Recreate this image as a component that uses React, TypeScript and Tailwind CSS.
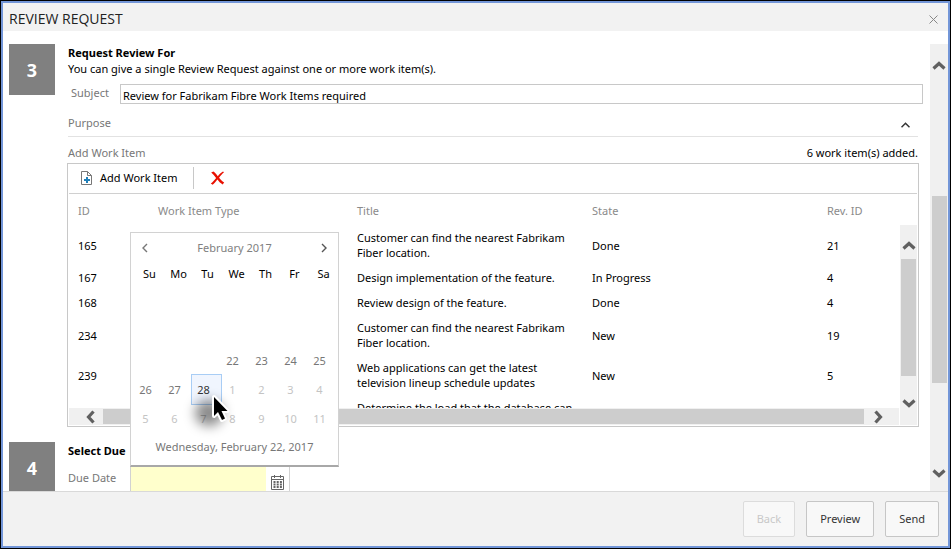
import React from "react";

type WorkItem = { id: string; type: string; title: string; state: string; rev: string };

const workItems: WorkItem[] = [
  { id: "165", type: "", title: "Customer can find the nearest Fabrikam Fiber location.", state: "Done", rev: "21" },
  { id: "167", type: "", title: "Design implementation of the feature.", state: "In Progress", rev: "4" },
  { id: "168", type: "", title: "Review design of the feature.", state: "Done", rev: "4" },
  { id: "234", type: "", title: "Customer can find the nearest Fabrikam Fiber location.", state: "New", rev: "19" },
  { id: "239", type: "", title: "Web applications can get the latest television lineup schedule updates", state: "New", rev: "5" },
  { id: "", type: "", title: "Determine the load that the database can", state: "", rev: "" },
];

const weekDays = ["Su", "Mo", "Tu", "We", "Th", "Fr", "Sa"];

const weeks: (number | null)[][] = [
  [null, null, null, null, null, null, null],
  [null, null, null, null, null, null, null],
  [null, null, null, 22, 23, 24, 25],
  [26, 27, 28, 1, 2, 3, 4],
  [5, 6, 7, 8, 9, 10, 11],
];

const arrowPaths = {
  up: "M2.5 10.5 L8 5.5 L13.5 10.5",
  down: "M2.5 5.5 L8 10.5 L13.5 5.5",
  left: "M10.5 2.5 L5.5 8 L10.5 13.5",
  right: "M5.5 2.5 L10.5 8 L5.5 13.5",
};

function ScrollArrow({ direction }: { direction: keyof typeof arrowPaths }) {
  return (
    <svg viewBox="0 0 16 16" className="size-4 shrink-0" fill="none" stroke="#606060" strokeWidth="3.2">
      <path d={arrowPaths[direction]} />
    </svg>
  );
}

function StepBadge({ value }: { value: string }) {
  return (
    <div className="flex h-[51px] w-[46px] shrink-0 items-center justify-center bg-[#808080] text-lg font-bold text-white">
      {value}
    </div>
  );
}

function Toolbar() {
  return (
    <div className="mx-px flex h-[30px] items-center border-b border-[#d0d0d0] pb-0.5">
      <button type="button" className="flex items-center gap-[7px] pl-[11px] text-black">
        <svg viewBox="0 0 13 15" className="h-[15px] w-[13px]" fill="none">
          <path d="M1.5 1.5 H7.5 L11.5 5.5 V14.5 H1.5 Z" stroke="#777" />
          <path d="M7.5 1.5 V5.5 H11.5" stroke="#777" />
          <path d="M7 7 V13 M4 10 H10" stroke="#1f7fb8" strokeWidth="2" />
        </svg>
        Add Work Item
      </button>
      <span className="ml-[15px] h-[22px] w-px bg-[#c8c8c8]" />
      <button type="button" aria-label="Delete work item" className="ml-4">
        <svg viewBox="0 0 15 14" className="h-[14px] w-[15px]" fill="#e81000">
          <path d="M1.2 1.6 L3.4 0.6 C5.2 2 6.8 3.8 7.8 5.2 C9.4 3.2 11 1.4 13 0.4 L14 1.2 C12 2.8 10.4 4.8 9.1 6.8 C10.4 8.5 12 10.2 14.2 11.6 L12.6 13.4 C10.4 12.2 8.7 10.4 7.4 8.6 C5.8 10.6 4.2 12.6 2.6 13.8 L0.8 12.6 C2.6 11 4.6 8.9 6.1 6.9 C4.6 5 3 3.2 1.2 1.6 Z" />
        </svg>
      </button>
    </div>
  );
}

function WorkItemGrid() {
  return (
    <div className="mr-[4px] -ml-px border border-[#c8c8c8] bg-white">
      <Toolbar />
      <div className="flex pb-px">
        <div className="min-w-0 flex-1">
          <div className="h-[214px] overflow-hidden">
            <table className="w-full table-fixed border-collapse text-left leading-[15px]">
              <colgroup>
                <col className="w-[80px]" />
                <col className="w-[199px]" />
                <col className="w-[235px]" />
                <col className="w-[235px]" />
                <col />
              </colgroup>
              <thead>
                <tr className="h-[31px] text-[#8a8a8a]">
                  <th className="pt-0.5 pl-[10px] font-normal">ID</th>
                  <th className="pt-0.5 pl-[10px] font-normal">Work Item Type</th>
                  <th className="pt-0.5 pl-[10px] font-normal">Title</th>
                  <th className="pt-0.5 pl-[10px] font-normal">State</th>
                  <th className="pt-0.5 pl-[10px] font-normal">Rev. ID</th>
                </tr>
              </thead>
              <tbody>
                {workItems.map((item, index) => (
                  <tr key={index} className="text-black">
                    <td className="py-[5px] pl-[10px]">{item.id}</td>
                    <td className="py-[5px] pl-[10px]">{item.type}</td>
                    <td className="py-[5px] pl-[10px]">{item.title}</td>
                    <td className="py-[5px] pl-[10px]">{item.state}</td>
                    <td className="py-[5px] pl-[10px]">{item.rev}</td>
                  </tr>
                ))}
              </tbody>
            </table>
          </div>
          <div className="mr-px ml-px flex h-[17px] items-center bg-[#f0f0f0]">
            <span className="flex w-[34px] justify-end pr-1">
              <ScrollArrow direction="left" />
            </span>
            <span className="h-[15px] flex-1 bg-[#cdcdcd]" />
            <span className="flex w-[35px] pl-[6px]">
              <ScrollArrow direction="right" />
            </span>
          </div>
        </div>
        <div className="mt-[31px] mr-px flex w-[17px] flex-col items-center bg-[#f0f0f0]">
          <span className="flex h-[34px] items-end pb-[5px]">
            <ScrollArrow direction="up" />
          </span>
          <span className="h-[117px] w-[15px] bg-[#cdcdcd]" />
          <span className="flex flex-1 items-start pt-[19px]">
            <ScrollArrow direction="down" />
          </span>
        </div>
      </div>
    </div>
  );
}

function dayClass(day: number, week: number) {
  if (week === 3 && day === 28) return "bg-[#f0f5fe] text-[#333] outline outline-[#a8cdf5]";
  if (week > 3 || (week === 3 && day < 26)) return "text-[#c4c4c4]";
  return "text-[#777]";
}

function Pointer() {
  return (
    <div className="pointer-events-none absolute top-[161px] left-[64px]">
      <div className="absolute top-[6px] left-0 h-[26px] w-[28px] rounded-full bg-black/45 blur-[6px]" />
      <svg viewBox="0 0 22 34" className="relative ml-[16px] h-[34px] w-[22px]">
        <path
          d="M3 3 V22 L7 18 L11 26 L14 24.5 L10.5 17 H16.5 Z"
          fill="#000"
          stroke="#fff"
          strokeWidth="4"
          strokeLinejoin="round"
          paintOrder="stroke"
        />
      </svg>
    </div>
  );
}

function Calendar() {
  return (
    <div className="absolute bottom-full -left-px z-10 w-[209px] border border-b-2 border-[#d2d2d2] border-b-[#a8a8a8] bg-white">
      <div className="flex h-[27px] items-center justify-between px-2 pt-[3px] text-[#808080]">
        <button type="button" aria-label="Previous month" className="w-3">
          <svg viewBox="0 0 12 12" className="size-3" fill="none" stroke="#777" strokeWidth="1.4">
            <path d="M8 2 L4 6 L8 10" />
          </svg>
        </button>
        <span>February 2017</span>
        <button type="button" aria-label="Next month" className="w-3">
          <svg viewBox="0 0 12 12" className="size-3" fill="none" stroke="#555" strokeWidth="1.4">
            <path d="M4 2 L8 6 L4 10" />
          </svg>
        </button>
      </div>
      <table className="relative ml-[3px] w-[203px] table-fixed border-collapse text-center">
        <thead>
          <tr className="h-[28px]">
            {weekDays.map((name) => (
              <th key={name} className="p-0 pl-0.5 font-normal text-black">
                {name}
              </th>
            ))}
          </tr>
        </thead>
        <tbody>
          {weeks.map((week, w) => (
            <tr key={w} className="h-[29px]">
              {week.map((day, d) => (
                <td key={d} className="p-0">
                  {day !== null && (
                    <button type="button" className={`block h-[29px] w-full pr-[6px] ${dayClass(day, w)}`}>
                      {day}
                    </button>
                  )}
                </td>
              ))}
            </tr>
          ))}
        </tbody>
      </table>
      <div className="h-8 pt-[6px] text-center text-[#777]">Wednesday, February 22, 2017</div>
      <Pointer />
    </div>
  );
}

function DueDateField() {
  return (
    <div className="relative flex h-[26px] w-[160px] border-x border-[#d2d2d2]">
      <input id="due-date" type="text" className="h-full w-[135px] bg-[#ffffcc] px-1 outline-none" />
      <button type="button" aria-label="Open calendar" className="flex flex-1 items-start justify-center pt-2">
        <svg viewBox="0 0 13 15" className="h-[15px] w-[13px]" fill="none" stroke="#666">
          <path d="M0.5 1.5 H12.5 V14.5 H0.5 Z M0.5 4.5 H12.5" />
          <path d="M3.5 0 V3 M9.5 0 V3" />
          <path d="M2.5 7 H11 M2.5 9.5 H11 M2.5 12 H11" strokeWidth="1.8" strokeDasharray="2 1.2" />
        </svg>
      </button>
      <Calendar />
    </div>
  );
}

export default function App() {
  return (
    <div className="flex h-screen flex-col border border-black bg-white font-['Noto_Sans','Open_Sans',sans-serif] text-[11px] leading-4">
      <div className="flex min-h-0 flex-1 flex-col border-2 border-[#7396d8]">
        <header className="flex h-7 shrink-0 items-center justify-between bg-[#f2f2f2] pr-[10px] pl-[6px]">
          <h1 className="pt-1 font-['Open_Sans',sans-serif] text-sm text-[#222]">REVIEW REQUEST</h1>
          <button type="button" aria-label="Close" className="pt-1">
            <svg viewBox="0 0 9 9" className="size-[9px]" fill="none" stroke="#888">
              <path d="M0.5 0.5 L8.5 8.5 M8.5 0.5 L0.5 8.5" />
            </svg>
          </button>
        </header>

        <div className="flex min-h-0 flex-1 overflow-hidden pt-[13px]">
          <main className="min-w-0 flex-1 pr-[7px] pl-[6px]">
            <section className="flex gap-[13px]">
              <StepBadge value="3" />
              <div className="min-w-0 flex-1">
                <h2 className="pt-px font-bold text-black">Request Review For</h2>
                <p className="text-black">You can give a single Review Request against one or more work item(s).</p>
                <div className="mt-[7px] flex h-5">
                  <label htmlFor="subject" className="w-[52px] pt-px pl-[3px] text-[#777]">
                    Subject
                  </label>
                  <input
                    id="subject"
                    type="text"
                    defaultValue="Review for Fabrikam Fibre Work Items required"
                    className="min-w-0 flex-1 border border-[#c8c8c8] px-[2px] pt-[3px] text-black outline-none"
                  />
                </div>
                <div className="mr-[5px] flex h-[33px] items-center justify-between border-b border-[#e2e2e2] pt-[5px] pr-2">
                  <span className="text-[#777]">Purpose</span>
                  <button type="button" aria-label="Collapse purpose" className="pt-1">
                    <svg viewBox="0 0 9 6" className="h-[6px] w-[9px]" fill="none" stroke="#333" strokeWidth="1.5">
                      <path d="M0.5 5.2 L4.5 1.2 L8.5 5.2" />
                    </svg>
                  </button>
                </div>
                <div className="mr-[5px] flex h-[26px] items-center justify-between pt-[6px]">
                  <span className="text-[#777]">Add Work Item</span>
                  <span className="text-black">6 work item(s) added.</span>
                </div>
                <WorkItemGrid />
              </div>
            </section>

            <section className="mt-[15px] flex gap-[13px]">
              <StepBadge value="4" />
              <div className="min-w-0 flex-1">
                <h2 className="pt-px font-bold text-black">Select Due</h2>
                <div className="mt-2 flex">
                  <label htmlFor="due-date" className="w-[62px] pt-[3px] text-[#777]">
                    Due Date
                  </label>
                  <DueDateField />
                </div>
              </div>
            </section>
          </main>

          <div className="flex w-[18px] shrink-0 flex-col items-center bg-[#f0f0f0]">
            <span className="pt-[14px]">
              <ScrollArrow direction="up" />
            </span>
            <span className="mt-[122px] h-[187px] w-[15px] bg-[#cdcdcd]" />
            <span className="mt-auto pb-[10px]">
              <ScrollArrow direction="down" />
            </span>
          </div>
        </div>

        <footer className="flex h-[55px] shrink-0 items-start justify-end gap-[11px] border-t border-[#d9d9d9] bg-[#f2f2f2] pt-[9px] pr-[9px]">
          <button type="button" disabled className="h-9 rounded-xs border border-[#dcdcdc] bg-[#f8f8f8] px-[13px] text-[#c8c8c8]">
            Back
          </button>
          <button type="button" className="h-9 rounded-xs border border-[#c6c6c6] bg-[#f8f8f8] px-[13px] text-[#333]">
            Preview
          </button>
          <button type="button" className="h-9 rounded-xs border border-[#c6c6c6] bg-[#f8f8f8] px-[13px] text-[#333]">
            Send
          </button>
        </footer>
      </div>
    </div>
  );
}
